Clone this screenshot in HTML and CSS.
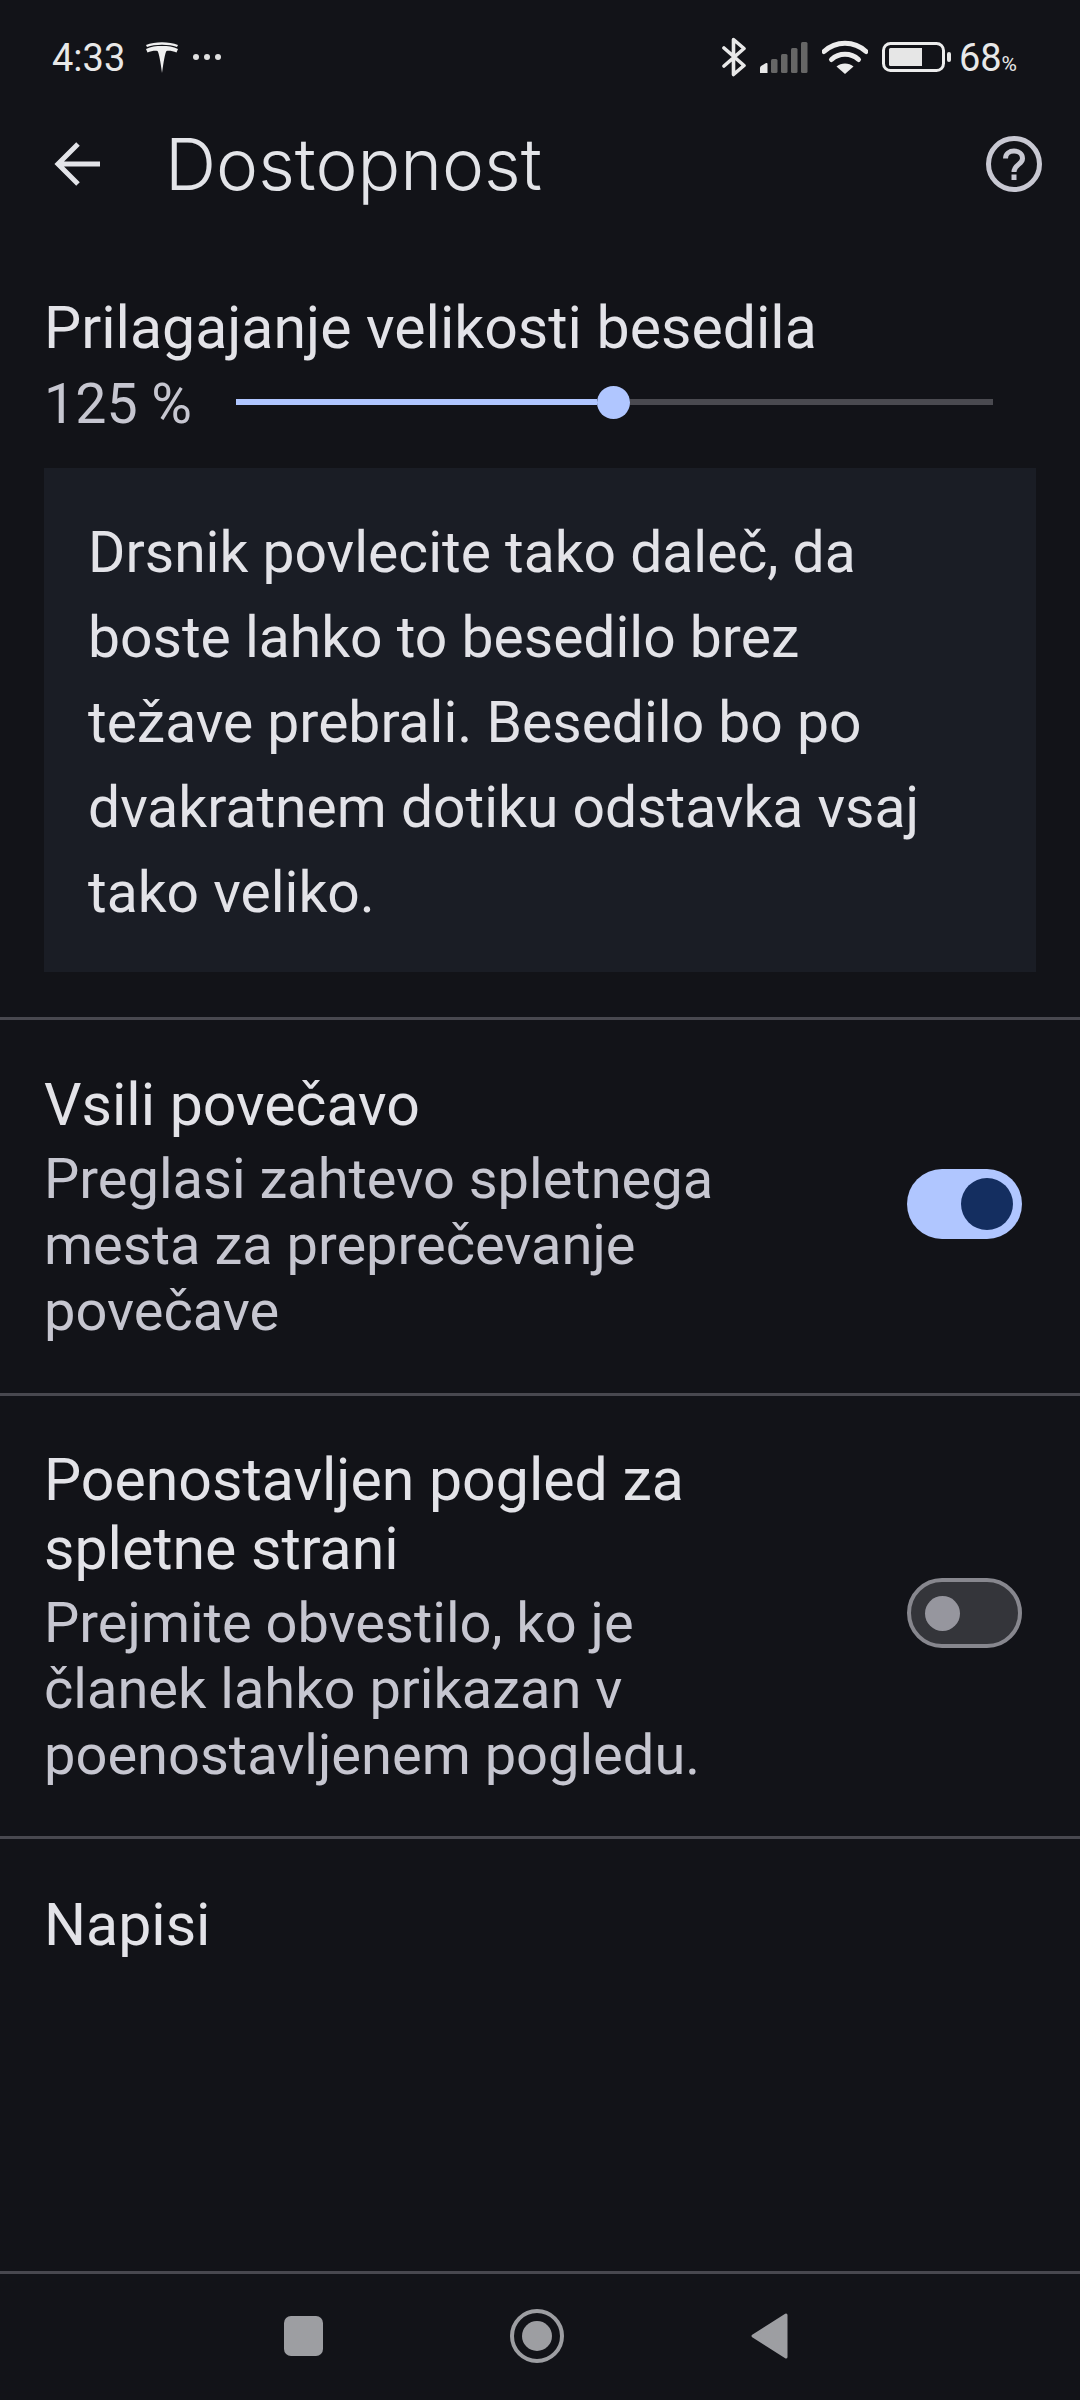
FILE: index.html
```html
<!DOCTYPE html>
<html lang="sl">
<head>
  <meta charset="UTF-8">
  <meta name="viewport" content="width=device-width, initial-scale=1">
  <title>Dostopnost</title>
  <link rel="stylesheet" href="styles.css">
</head>
<body>

<div class="page">

  <!-- Status bar -->
  <div class="statusbar">
    <span class="time">4:33</span>
    <svg class="tesla" width="34" height="32" viewBox="0 0 34 32">
      <path d="M1 4C10 .3 24 .3 33 4L32 6C24 3 10 3 2 6Z" fill="#f0f0f0"/>
      <path d="M1 8C6 5.500 11 5 17 5S28 5.500 33 8L31.500 11.500C28 10 24 9.500 21.500 10C20 12 18.500 21 17 32C15.500 21 14 12 12.500 10C10 9.500 6 10 2.500 11.500Z" fill="#f0f0f0"/>
    </svg>
    <svg class="dots" width="28" height="8" viewBox="0 0 28 8">
      <circle cx="3" cy="4" r="3" fill="#e0e0e0"/><circle cx="14" cy="4" r="3" fill="#e0e0e0"/><circle cx="25" cy="4" r="3" fill="#e0e0e0"/>
    </svg>
    <div class="status-right">
      <svg width="24" height="40" viewBox="0 0 24 40">
        <path d="M2 11L22 28.500L11.500 37.500V2.500L22 11.500L2 29" fill="none" stroke="#e8e8e8" stroke-width="3.600" stroke-linejoin="round" stroke-linecap="round"/>
      </svg>
      <svg class="signal" width="48" height="32" viewBox="0 0 48 32">
        <path d="M0 31V26Q0 25 1 24L6 21Q7.500 20.500 7.500 22V31Z" fill="#e8e8e8"/>
        <rect x="11" y="17" width="6.500" height="14" rx="1.500" fill="#666"/>
        <rect x="21" y="12" width="6.500" height="19" rx="1.500" fill="#666"/>
        <rect x="31" y="6" width="6.500" height="25" rx="1.500" fill="#666"/>
        <rect x="41" y="0" width="6.500" height="31" rx="1.500" fill="#666"/>
      </svg>
      <svg class="wifi" width="46" height="34" viewBox="0 0 46 34">
        <path d="M2 11.500C14 .5 32 .5 44 11.500" fill="none" stroke="#ececec" stroke-width="5" stroke-linecap="round"/>
        <path d="M9.500 19.500C17 12.500 29 12.500 36.500 19.500" fill="none" stroke="#ececec" stroke-width="5" stroke-linecap="round"/>
        <path d="M23 34L14.500 26.500C19 22.500 27 22.500 31.500 26.500Z" fill="#ececec"/>
      </svg>
      <svg class="battery" width="69" height="30" viewBox="0 0 69 30">
        <rect x="1.500" y="1.500" width="60" height="27" rx="7" fill="none" stroke="#ececec" stroke-width="3"/>
        <path d="M7 7.500Q7 6 8.500 6H40V24H8.500Q7 24 7 22.500Z" fill="#e6e6e6"/>
        <rect x="65" y="10" width="4" height="10" rx="2" fill="#e6e6e6"/>
      </svg>
      <span class="battery-pct">68<small>%</small></span>
    </div>
  </div>

  <!-- Toolbar -->
  <header class="toolbar">
    <svg class="back" width="48" height="46" viewBox="0 0 48 46">
      <path d="M46 23H4M24 3L4 23L24 43" fill="none" stroke="#e3e4e8" stroke-width="5"/>
    </svg>
    <h1>Dostopnost</h1>
    <svg class="help" width="56" height="56" viewBox="0 0 56 56">
      <circle cx="28" cy="28" r="25.500" fill="none" stroke="#c8c8d2" stroke-width="5"/>
      <path d="M19.500 22.500C19.500 12.500 36.500 12.500 36.500 22.500C36.500 28.500 28 28.500 28 36" fill="none" stroke="#c8c8d2" stroke-width="5"/>
      <rect x="25.500" y="38.500" width="5" height="5.500" fill="#c8c8d2"/>
    </svg>
  </header>

  <!-- Text scaling -->
  <section class="scaling">
    <div class="row-title">Prilagajanje velikosti besedila</div>
    <div class="slider-row">
      <span class="percent">125 %</span>
      <div class="slider">
        <div class="slider-fill"></div>
        <div class="slider-thumb"></div>
        <div class="slider-rest"></div>
      </div>
    </div>
    <div class="preview">Drsnik povlecite tako daleč, da boste lahko to besedilo brez težave prebrali. Besedilo bo po dvakratnem dotiku odstavka vsaj tako veliko.</div>
  </section>

  <section class="row row-zoom">
    <div class="row-text">
      <div class="row-title">Vsili povečavo</div>
      <div class="row-desc">Preglasi zahtevo spletnega mesta za preprečevanje povečave</div>
    </div>
    <div class="toggle on"><span class="knob"></span></div>
  </section>

  <section class="row row-simple">
    <div class="row-text">
      <div class="row-title">Poenostavljen pogled za spletne strani</div>
      <div class="row-desc">Prejmite obvestilo, ko je članek lahko prikazan v poenostavljenem pogledu.</div>
    </div>
    <div class="toggle off"><span class="knob"></span></div>
  </section>

  <section class="row-captions">
    <div class="row-title">Napisi</div>
  </section>

  <!-- Navigation bar -->
  <nav class="navbar">
    <span class="nav-square"></span>
    <svg width="54" height="54" viewBox="0 0 54 54">
      <circle cx="27" cy="27" r="25" fill="none" stroke="#9d9ea2" stroke-width="4"/>
      <circle cx="27" cy="27" r="15" fill="#9d9ea2"/>
    </svg>
    <svg width="37" height="46" viewBox="0 0 37 46">
      <path d="M35 2V44L2 23Z" fill="#9d9ea2" stroke="#9d9ea2" stroke-width="3" stroke-linejoin="round"/>
    </svg>
  </nav>

</div>

</body>
</html>
```

FILE: styles.css
```css
* {
  box-sizing: border-box;
}

body {
  margin: 0;
  background: #121318;
  color: #e3e3e8;
  font-family: Roboto, sans-serif;
}

.page {
  width: 1080px;
  height: 2400px;
  display: flex;
  flex-direction: column;
}

/* Status bar */
.statusbar {
  height: 110px;
  padding: 37px 63px 0 52px;
  display: flex;
  align-items: flex-start;
  color: #e8e8e8;
}

.time {
  font-size: 38px;
  line-height: 42px;
  width: 93px;
}

.tesla {
  margin-top: 4px;
}

.dots {
  margin: 16px 0 0 14px;
}

.status-right {
  margin-left: auto;
  display: flex;
  align-items: flex-start;
  gap: 14px;
}

.signal {
  margin-top: 5px;
}

.wifi {
  margin: 3px 0 0 0;
}

.battery {
  margin: 5px 0 0 0;
}

.battery-pct {
  font-size: 38px;
  line-height: 42px;
  margin-left: -6px;
}

.battery-pct small {
  font-size: 21px;
}

/* Toolbar */
.toolbar {
  height: 110px;
  padding: 0 38px 2px 54px;
  display: flex;
  align-items: center;
}

.toolbar h1 {
  margin: 0 0 0 63px;
  font-family: Inter, sans-serif;
  font-weight: 350;
  font-size: 71px;
  color: #e3e4e8;
}

.help {
  margin-left: auto;
}

/* Text scaling */
.scaling {
  padding: 73px 44px 44px;
  border-bottom: 3px solid #48484f;
  height: 800px;
}

.row-title {
  font-size: 59px;
  line-height: 69px;
  color: #e3e3e8;
}

.slider-row {
  display: flex;
  align-items: center;
  margin-top: 7px;
}

.percent {
  margin-top: 4px;
  font-size: 55.500px;
  line-height: 64px;
  color: #c6c6d0;
  width: 192px;
}

.slider {
  width: 757px;
  margin-bottom: 2px;
  display: flex;
  align-items: center;
}

.slider-fill {
  width: 361px;
  height: 6px;
  background: #b0c6ff;
}

.slider-thumb {
  width: 33px;
  height: 33px;
  border-radius: 50%;
  background: #b0c6ff;
  flex-shrink: 0;
}

.slider-rest {
  flex: 1;
  height: 6px;
  background: #4a4a50;
}

.preview {
  margin-top: 31px;
  height: 504px;
  padding: 42px 80px 0 44px;
  background: #1a1d25;
  font-size: 57px;
  line-height: 85px;
}

/* Rows */
.row {
  display: flex;
  align-items: center;
  padding: 0 58px 0 44px;
  border-bottom: 3px solid #48484f;
}

.row-zoom {
  height: 376px;
}

.row-simple {
  height: 443px;
}

.row-text {
  width: 700px;
}

.row-desc {
  margin-top: 7px;
  font-size: 56px;
  line-height: 66px;
  color: #c6c6d0;
}

.toggle {
  margin: 0 0 6px auto;
  width: 115px;
  height: 70px;
  border-radius: 35px;
  display: flex;
  align-items: center;
}

.toggle.on {
  background: #b0c6ff;
  justify-content: flex-end;
  padding-right: 9px;
}

.toggle.on .knob {
  width: 52px;
  height: 52px;
  border-radius: 50%;
  background: #142e60;
}

.toggle.off {
  background: #34353a;
  border: 4px solid #87878e;
  padding-left: 14px;
}

.toggle.off .knob {
  width: 35px;
  height: 35px;
  border-radius: 50%;
  background: #96969e;
}

.row-captions {
  padding: 51px 44px 0;
}

/* Navigation bar */
.navbar {
  margin-top: auto;
  height: 129px;
  padding: 0 292px 3px 284px;
  border-top: 3px solid #48484f;
  display: flex;
  align-items: center;
  justify-content: space-between;
}

.nav-square {
  width: 39px;
  height: 40px;
  border-radius: 7px;
  background: #9d9ea2;
}
```
